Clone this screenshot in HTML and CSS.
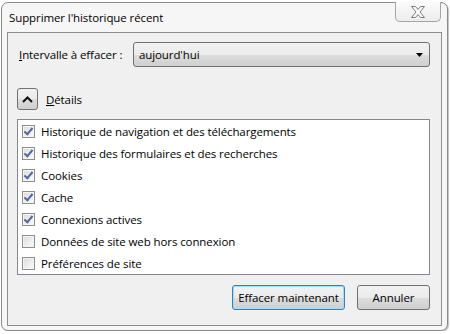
FILE: index.html
```html
<!DOCTYPE html>
<html lang="fr">
<head>
<meta charset="utf-8">
<link rel="stylesheet" href="styles.css">
</head>
<body>
<div class="window">
  <div class="titlebar">
    <span class="title">Supprimer l'historique récent</span>
    <button class="close" aria-label="Fermer">
      <svg width="16" height="14" viewBox="0 0 16 14"><path d="M1.5 1.5h4l2.5 3 2.5-3h4l-4.5 5.5 4.5 5.5h-4l-2.5-3-2.5 3h-4l4.5-5.5z" fill="#fafafa" stroke="#7d7d7d" stroke-width="1" stroke-linejoin="round"/></svg>
    </button>
  </div>
  <div class="content">
    <div class="range-row">
      <span class="label"><u>I</u>ntervalle à effacer :</span>
      <div class="select">
        <span>aujourd'hui</span>
        <svg class="arrow" width="7" height="4" viewBox="0 0 7 4"><path d="M0 0h7L3.5 4z" fill="#000"/></svg>
      </div>
    </div>
    <div class="details-row">
      <div class="toggle">
        <svg width="11" height="7" viewBox="0 0 11 7"><path d="M1 6l4.5-4.5L10 6" fill="none" stroke="#111" stroke-width="2"/></svg>
      </div>
      <span><u>D</u>étails</span>
    </div>
    <div class="list">
      <div class="item"><span class="cb on"></span>Historique de navigation et des téléchargements</div>
      <div class="item"><span class="cb on"></span>Historique des formulaires et des recherches</div>
      <div class="item"><span class="cb on"></span>Cookies</div>
      <div class="item"><span class="cb on"></span>Cache</div>
      <div class="item"><span class="cb on"></span>Connexions actives</div>
      <div class="item"><span class="cb"></span>Données de site web hors connexion</div>
      <div class="item"><span class="cb"></span>Préférences de site</div>
    </div>
    <div class="buttons">
      <button class="btn default">Effacer maintenant</button>
      <button class="btn">Annuler</button>
    </div>
  </div>
</div>
</body>
</html>
```
FILE: styles.css
```css
html, body {
  margin: 0;
  padding: 0;
  background: #ffffff;
}
body {
  font-family: "Open Sans", "Noto Sans", sans-serif;
  font-size: 11.5px;
  letter-spacing: -0.1px;
  color: #000;
}
.window {
  box-sizing: border-box;
  margin: 2px 0 0 1px;
  width: 447px;
  height: 329px;
  border: 1px solid #8a8a8a;
  border-radius: 7px;
  background: #f6f6f6;
  display: flex;
  flex-direction: column;
  box-shadow: 1px 1px 1px rgba(0,0,0,0.25);
}
.titlebar {
  height: 29px;
  display: flex;
  align-items: flex-start;
  flex: none;
}
.title {
  margin: 7px 0 0 7px;
}
.close {
  margin: -1px 6px 0 auto;
  width: 46px;
  height: 20px;
  box-sizing: border-box;
  border: 1px solid #a5a5a5;
  border-top: none;
  border-radius: 0 0 5px 5px;
  background: linear-gradient(#fbfbfb, #ececec);
  padding: 0;
  display: flex;
  align-items: center;
  justify-content: center;
}
.content {
  flex: 1;
  margin: 0 5px 4px 5px;
  border: 1px solid #8e8e8e;
  background: #f0f0f0;
  padding: 9px 11px 0 9px;
  display: flex;
  flex-direction: column;
}
.range-row {
  display: flex;
  align-items: center;
  height: 25px;
}
.label {
  margin-left: 2px;
  width: 114px;
}
.select {
  flex: 1;
  height: 25px;
  box-sizing: border-box;
  border: 1px solid #707070;
  border-radius: 3px;
  background: linear-gradient(#f2f2f2 0%, #ebebeb 50%, #dddddd 51%, #cfcfcf 100%);
  display: flex;
  align-items: center;
  padding: 0 6px 0 5px;
}
.select span { flex: 1; }
.arrow { margin-top: 1px; }
.details-row {
  display: flex;
  align-items: center;
  margin-top: 21px;
  height: 22px;
}
.toggle {
  width: 21px;
  height: 22px;
  box-sizing: border-box;
  border: 1px solid #707070;
  border-radius: 3px;
  background: linear-gradient(#f2f2f2 0%, #ebebeb 50%, #dddddd 51%, #cfcfcf 100%);
  display: flex;
  align-items: center;
  justify-content: center;
  margin-right: 8px;
}
.list {
  margin-top: 9px;
  border: 1px solid #828790;
  background: #fff;
  height: 154px;
}
.item {
  height: 22px;
  display: flex;
  align-items: center;
  padding-left: 4px;
}
.cb {
  width: 13px;
  height: 13px;
  box-sizing: border-box;
  border: 1px solid #8f8f8f;
  background: linear-gradient(135deg, #dcdcdc, #fbfbfb);
  box-shadow: inset 0 0 0 1px #f4f4f4;
  margin-right: 6px;
  position: relative;
}
.cb.on::after {
  content: "";
  position: absolute;
  left: 3px;
  top: 0px;
  width: 3px;
  height: 7px;
  border: solid #51679f;
  border-width: 0 2px 2px 0;
  transform: rotate(40deg);
}
.buttons {
  display: flex;
  justify-content: flex-end;
  gap: 12px;
  margin-top: 10px;
}
.btn {
  font-family: inherit;
  font-size: inherit;
  letter-spacing: inherit;
  white-space: nowrap;
  height: 25px;
  box-sizing: border-box;
  border: 1px solid #707070;
  border-radius: 3px;
  background: linear-gradient(#f2f2f2 0%, #ebebeb 50%, #dddddd 51%, #cfcfcf 100%);
  padding: 0;
  color: #000;
}
.btn.default {
  width: 113px;
  border-color: #3c7fb1;
  box-shadow: inset 0 0 0 1px #9fdcf7;
}
.btn:not(.default) { width: 73px; }
```
